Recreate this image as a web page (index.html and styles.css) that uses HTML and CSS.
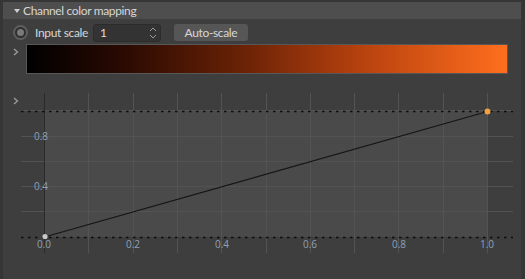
FILE: index.html
```html
<!DOCTYPE html>
<html>
<head>
    <meta charset="utf-8">
    <title>Channel color mapping</title>
    <link rel="stylesheet" href="styles.css">
</head>
<body>
<div class="panel">
    <div class="header"><span class="caret"></span>Channel color mapping</div>

    <div class="row scale-row">
        <span class="radio"></span>
        <span class="label">Input scale</span>
        <div class="spin">
            <span class="spin-value">1</span>
            <svg class="spin-arrows" width="8" height="14" viewBox="0 0 8 14">
                <path d="M1 5 L4 2 L7 5" fill="none" stroke="#9a9a9a" stroke-width="1"/>
                <path d="M1 9 L4 12 L7 9" fill="none" stroke="#9a9a9a" stroke-width="1"/>
            </svg>
        </div>
        <button type="button" class="btn">Auto-scale</button>
    </div>

    <div class="row ramp-row">
        <span class="chev">
            <svg width="6" height="8" viewBox="0 0 6 8"><path d="M1 1 L4.5 4 L1 7" fill="none" stroke="#9a9a9a" stroke-width="1.4"/></svg>
        </span>
        <div class="ramp"></div>
    </div>

    <div class="row graph-row">
        <span class="chev graph-chev">
            <svg width="6" height="8" viewBox="0 0 6 8"><path d="M1 1 L4.5 4 L1 7" fill="none" stroke="#9a9a9a" stroke-width="1.4"/></svg>
        </span>
        <svg class="graph" width="494" height="170" viewBox="21 88 494 170">
            <!-- plot area -->
            <rect x="44" y="111" width="443" height="126" fill="#4a4a4a"/>
            <!-- horizontal grid -->
            <g stroke="#535353" stroke-width="1">
                <line x1="21" y1="110.5" x2="513" y2="110.5"/>
                <line x1="21" y1="136.5" x2="513" y2="136.5"/>
                <line x1="21" y1="161.5" x2="513" y2="161.5"/>
                <line x1="21" y1="186.5" x2="513" y2="186.5"/>
                <line x1="21" y1="211.5" x2="513" y2="211.5"/>
            </g>
            <!-- vertical grid -->
            <g stroke="#535353" stroke-width="1">
                <line x1="88.5" y1="93" x2="88.5" y2="253"/>
                <line x1="133.5" y1="93" x2="133.5" y2="253"/>
                <line x1="177.5" y1="93" x2="177.5" y2="253"/>
                <line x1="221.5" y1="93" x2="221.5" y2="253"/>
                <line x1="266.5" y1="93" x2="266.5" y2="253"/>
                <line x1="310.5" y1="93" x2="310.5" y2="253"/>
                <line x1="354.5" y1="93" x2="354.5" y2="253"/>
                <line x1="398.5" y1="93" x2="398.5" y2="253"/>
                <line x1="443.5" y1="93" x2="443.5" y2="253"/>
                <line x1="487.5" y1="93" x2="487.5" y2="253"/>
            </g>
            <line x1="44.5" y1="93" x2="44.5" y2="253" stroke="#2a2a2a" stroke-width="1"/>
            <!-- limits -->
            <g stroke="#0c0c0c" stroke-width="1.3" stroke-dasharray="2.5 4.5">
                <line x1="21" y1="111.5" x2="513" y2="111.5"/>
                <line x1="21" y1="237.5" x2="513" y2="237.5"/>
            </g>
            <!-- curve -->
            <line x1="44.5" y1="237" x2="487.5" y2="111.5" stroke="#151515" stroke-width="1.2"/>
            <circle cx="45" cy="236.5" r="2.6" fill="#c8c8c8"/>
            <circle cx="487.5" cy="111.5" r="3" fill="#f0a040"/>
            <!-- labels -->
            <g class="ticks" text-anchor="middle">
                <text x="41" y="139.5">0.8</text>
                <text x="41" y="190">0.4</text>
                <text x="44" y="247.5">0.0</text>
                <text x="133" y="247.5">0.2</text>
                <text x="222" y="247.5">0.4</text>
                <text x="310" y="247.5">0.6</text>
                <text x="399" y="247.5">0.8</text>
                <text x="487" y="247.5">1.0</text>
            </g>
        </svg>
    </div>
</div>
</body>
</html>
```

FILE: styles.css
```css
html, body {
    margin: 0;
    padding: 0;
}

body {
    width: 525px;
    height: 279px;
    overflow: hidden;
    background: #363636;
    font-family: Lato, "Noto Sans", sans-serif;
    font-size: 12px;
    letter-spacing: -0.35px;
    color: #d6d6d6;
}

.panel {
    margin: 2px 0 0 3px;
    width: 518px;
    height: 277px;
    background: #3e3e3e;
}

.header {
    height: 17px;
    line-height: 17px;
    background: #4e4e4e;
    padding-left: 11px;
    display: flex;
    align-items: center;
}

.caret {
    width: 0;
    height: 0;
    border-left: 3px solid transparent;
    border-right: 3px solid transparent;
    border-top: 4px solid #d0d0d0;
    margin-right: 3px;
}

.row {
    display: flex;
    align-items: center;
}

.scale-row {
    margin-top: 4px;
    height: 19px;
    padding-left: 10px;
}

.radio {
    box-sizing: border-box;
    width: 15px;
    height: 15px;
    border-radius: 50%;
    border: 2px solid #5e5e5e;
    background: #2f2f2f;
    position: relative;
}

.radio::after {
    content: "";
    position: absolute;
    left: 2px;
    top: 2px;
    width: 7px;
    height: 7px;
    border-radius: 50%;
    background: #7a7a7a;
}

.label {
    margin-left: 7px;
}

.spin {
    box-sizing: border-box;
    margin-left: 5px;
    width: 68px;
    height: 18px;
    background: #333333;
    border: 1px solid #2c2c2c;
    border-radius: 3px;
    display: flex;
    align-items: center;
    justify-content: space-between;
    padding: 0 3px 0 6px;
}

.spin-value {
    color: #dcdcdc;
}

.btn {
    margin-left: 13px;
    width: 74px;
    height: 17px;
    border: none;
    border-radius: 3px;
    background: #565656;
    color: #d6d6d6;
    font-family: inherit;
    font-size: 12px;
    letter-spacing: inherit;
    padding: 0;
    line-height: 17px;
}

.ramp-row {
    margin-top: 2px;
    padding-left: 10px;
    align-items: flex-start;
}

.chev {
    width: 13px;
    display: flex;
}

.ramp-row .chev {
    margin-top: 4px;
}

.ramp {
    box-sizing: border-box;
    width: 482px;
    height: 30px;
    border: 1px solid #575757;
    background: linear-gradient(to right, #000000 0%, #2a0a02 20%, #6a2206 45%, #b8420e 70%, #ff6e1e 100%);
}

.graph-row {
    margin-top: 14px;
    padding-left: 10px;
    align-items: flex-start;
}

.graph-chev {
    width: 8px;
    margin-top: 9px;
}

.graph {
    display: block;
}

.ticks text {
    font-family: "Open Sans", "Noto Sans", sans-serif;
    font-size: 10px;
    letter-spacing: 0;
    fill: #8ea2b7;
}
```
